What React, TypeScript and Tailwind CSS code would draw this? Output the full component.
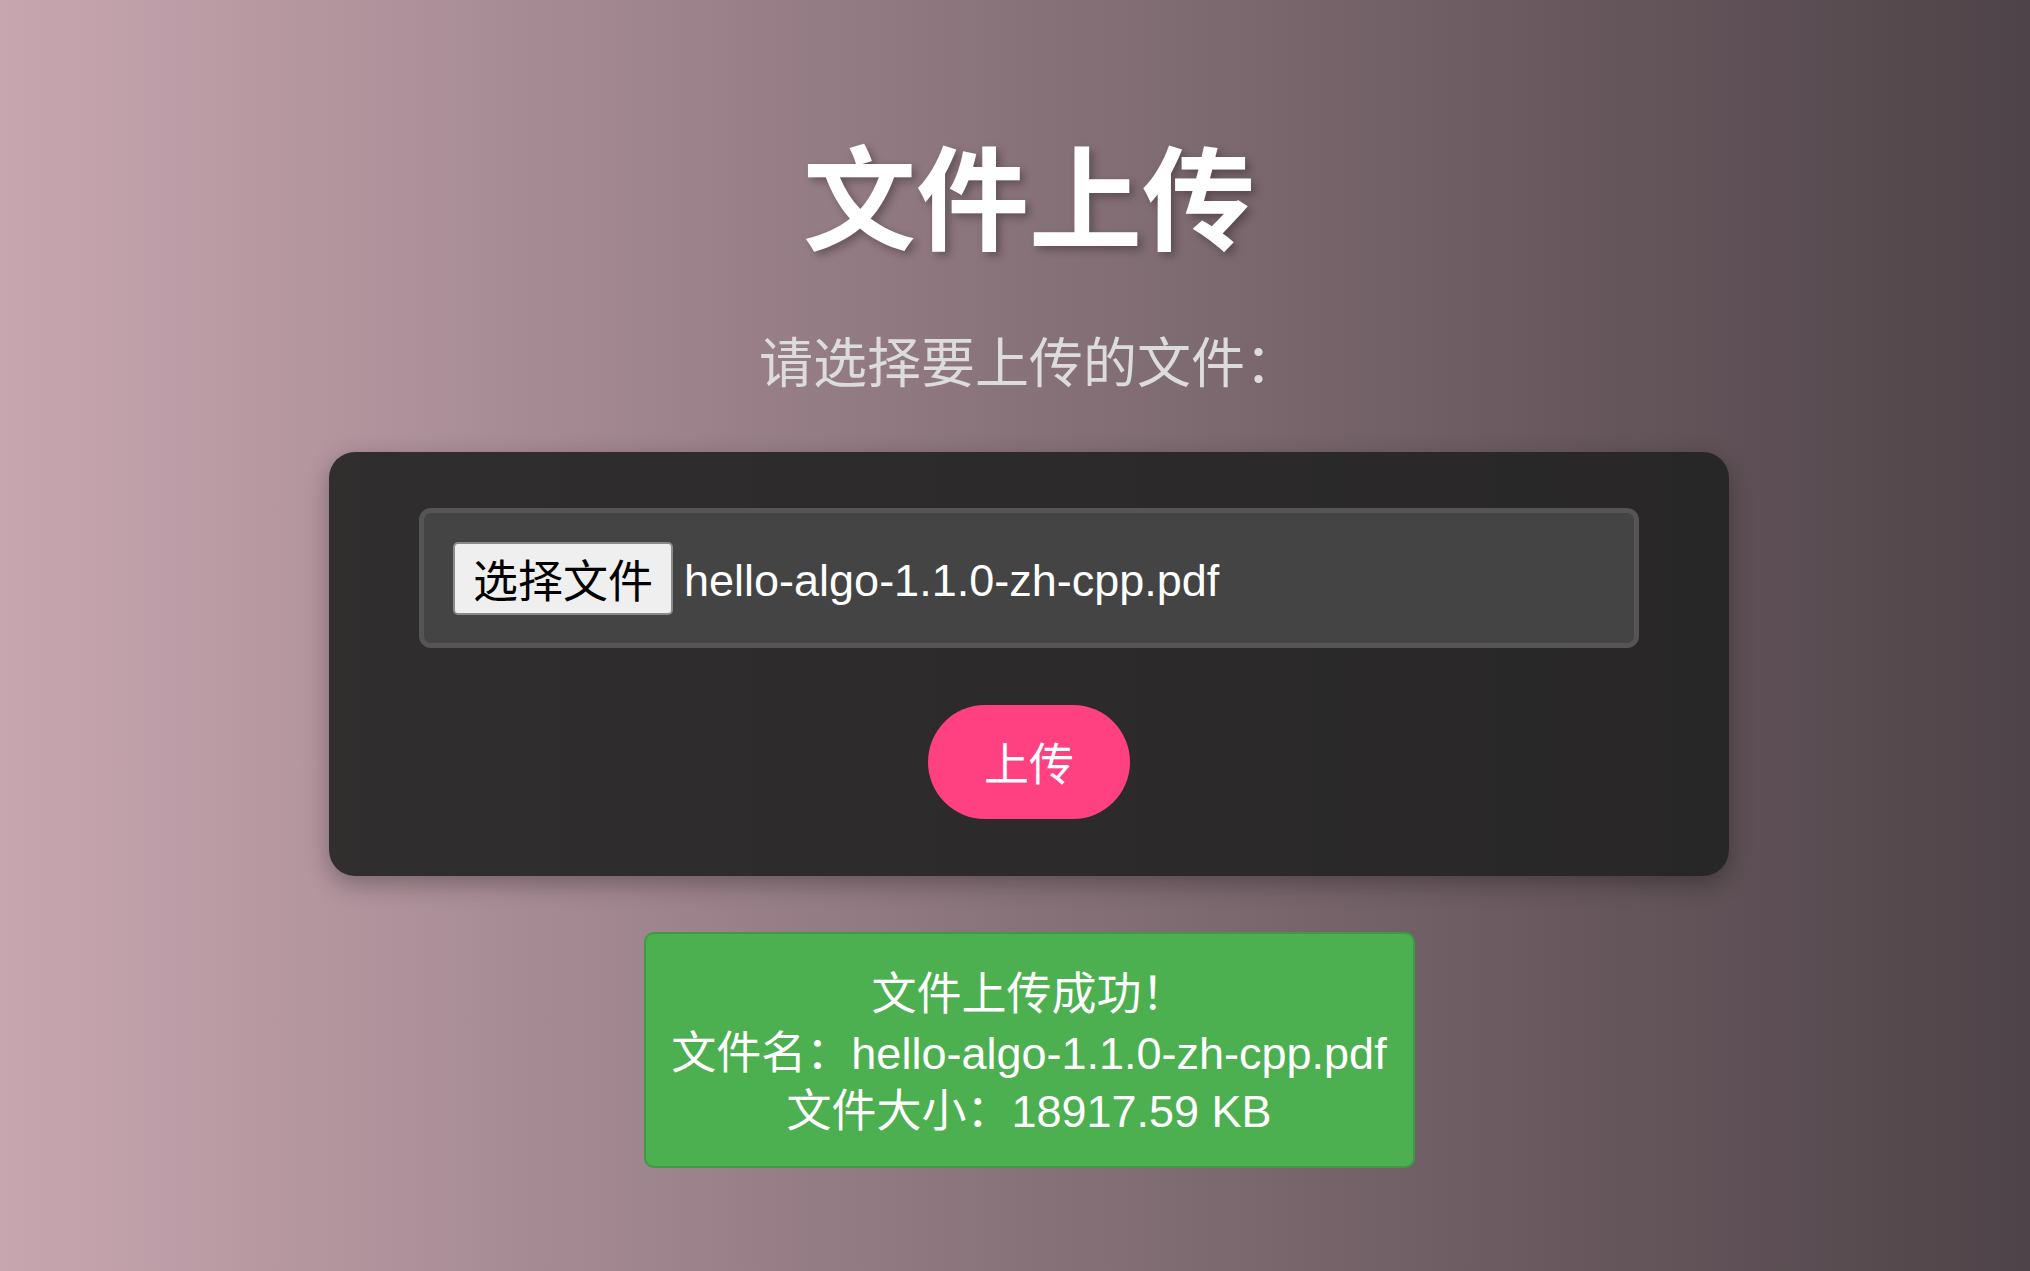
import React from "react";

export default function App() {
  return (
    <div
      className="min-h-screen w-full bg-gradient-to-r from-[#c8a6b0] to-[#4e4348] flex flex-col items-center pl-[28px] pt-[146px] pb-[100px]"
      style={{ fontFamily: '"Liberation Sans", "Noto Sans CJK SC", sans-serif' }}
    >
      <h1 className="text-[113px] leading-none font-bold text-white [text-shadow:4px_4px_8px_rgba(0,0,0,0.3)]">
        文件上传
      </h1>
      <p className="mt-[78px] text-[54px] leading-none text-[#dcdcdc]">请选择要上传的文件：</p>

      <div className="mt-[61px] w-[1400px] px-[90px] pt-[56px] pb-[57px] rounded-[26px] bg-[rgba(34,34,34,0.9)] shadow-[0_8px_24px_rgba(0,0,0,0.3)] flex flex-col items-center">
        <div className="w-full h-[140px] border-[5px] border-[#555555] bg-[#444444] rounded-[12px] flex items-center pl-[29px]">
          <div className="h-[73px] w-[220px] bg-[#efefef] border-2 border-[#8a8a8a] rounded-[5px] text-[45px] leading-none text-black flex items-center justify-center pt-[8px]">
            选择文件
          </div>
          <span className="ml-[11px] text-white text-[45px] leading-none pt-[5px]">hello-algo-1.1.0-zh-cpp.pdf</span>
        </div>
        <button className="mt-[57px] w-[202px] h-[114px] rounded-full bg-[#ff4081] text-white text-[45px] leading-none flex items-center justify-center pt-[6px]">
          上传
        </button>
      </div>

      <div className="mt-[56px] w-[771px] border-2 border-[#3e9a43] rounded-[10px] bg-[#4caf50] pt-[32px] pb-[24px] text-white text-[45px] leading-[58.5px] text-center">
        <div>文件上传成功！</div>
        <div>文件名：hello-algo-1.1.0-zh-cpp.pdf</div>
        <div>文件大小：18917.59 KB</div>
      </div>
    </div>
  );
}
